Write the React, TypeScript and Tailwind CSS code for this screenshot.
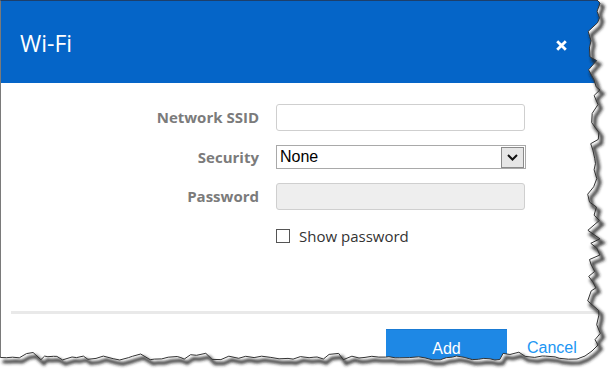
import React from 'react';

// seeded jitter so the torn edge is the same on every render
function makeRand(seed: number) {
  let s = seed;
  return () => {
    s = (s * 16807) % 2147483647;
    return s / 2147483647;
  };
}

function tornEdge() {
  const r = makeRand(91);
  const pts: [number, number][] = [[597, 0]];
  let y = 0;
  while (y < 338) {
    y += 3 + r() * 7;
    const x = 594 + (r() - 0.5) * 13;
    pts.push([x, Math.min(y, 340)]);
  }
  pts.push([598, 345], [592, 351], [585, 356], [577, 359]);
  let x = 575;
  while (x > 0) {
    x -= 3 + r() * 7;
    let yy = 358 + (r() - 0.5) * 4;
    if ((x > 20 && x < 40) || (x > 140 && x < 150) || (x > 190 && x < 210) || (x > 325 && x < 340) || (x > 500 && x < 520)) yy -= 4;
    pts.push([Math.max(x, 0), yy]);
  }
  return pts;
}

const edge = tornEdge();
const line = edge.map((p, i) => `${i ? 'L' : 'M'}${p[0].toFixed(1)} ${p[1].toFixed(1)}`).join(' ');
const mask = `M0 0 H615 V379 H0 Z ${line} L0 0 Z`;

function TornOverlay() {
  return (
    <svg className="pointer-events-none absolute inset-0" width="615" height="379" viewBox="0 0 615 379">
      <defs>
        <filter id="blur" x="-10%" y="-10%" width="120%" height="120%">
          <feGaussianBlur stdDeviation="1.5" />
        </filter>
      </defs>
      <path d={mask} fill="#fff" fillRule="evenodd" />
      <path d={line} transform="translate(3 4)" fill="none" stroke="#222" strokeOpacity="0.85" strokeWidth="3.5" filter="url(#blur)" />
      <path d={line} fill="none" stroke="#333" strokeWidth="1" />
    </svg>
  );
}

function Row({ label, children }: { label: string; children: React.ReactNode }) {
  return (
    <div className="flex items-center">
      <div className="w-[258px] text-right text-[15px] font-bold text-[#7b7b7b]">{label}</div>
      <div className="ml-[17px]">{children}</div>
    </div>
  );
}

export default function App() {
  return (
    <div className="relative h-[379px] w-[615px] overflow-hidden bg-white font-['Open_Sans',sans-serif]">
      <div className="flex h-full flex-col border-l border-t border-l-[#7a7a7a] border-t-[#1d3f6b]">
        <div className="flex h-[82px] items-center justify-between bg-[#0565c8] pl-[19px] pr-[48px] pt-[3px] text-white">
          <span className="text-[23px] leading-none">Wi-Fi</span>
          <svg width="11" height="11" viewBox="0 0 11 11" className="mt-[3px]">
            <path d="M1.2 1.2 L9.8 9.8 M9.8 1.2 L1.2 9.8" stroke="#fff" strokeWidth="2.8" />
          </svg>
        </div>

        <div className="flex h-[228px] flex-col pt-[21px]">
          <Row label="Network SSID">
            <div className="h-[27px] w-[249px] rounded-[3px] border border-[#cfcfcf] bg-white" />
          </Row>
          <div className="mt-[14px]">
            <Row label="Security">
              <div className="flex h-[24px] w-[250px] items-center border border-[#a9a9a9] bg-white pl-[3px] font-['Liberation_Sans',sans-serif] text-[16px] text-black">
                <span className="flex-1">None</span>
                <div className="mr-px flex h-[21px] w-[23px] items-center justify-center border border-[#8a8a8a] bg-[#e6e6e6]">
                  <svg width="11" height="7" viewBox="0 0 11 7">
                    <path d="M1 1 L5.5 5.5 L10 1" fill="none" stroke="#111" strokeWidth="2" />
                  </svg>
                </div>
              </div>
            </Row>
          </div>
          <div className="mt-[14px]">
            <Row label="Password">
              <div className="h-[27px] w-[249px] rounded-[3px] border border-[#cfcfcf] bg-[#eeeeee]" />
            </Row>
          </div>
          <div className="ml-[275px] mt-[15px] flex items-center">
            <div className="h-[14px] w-[14px] border border-[#555] bg-white" />
            <span className="ml-[9px] text-[15px] text-[#333]">Show password</span>
          </div>
        </div>

        <div className="ml-[10px] h-[3px] bg-[#e9e9e9]" />

        <div className="mt-[15px] flex font-['Liberation_Sans',sans-serif] text-[16px]">
          <div className="ml-[385px] flex h-[36px] w-[121px] justify-center border-t border-[#1a7bd4] bg-[#1e88e5] pt-[7px] text-white">
            Add
          </div>
          <span className="ml-[20px] pt-[7px] text-[#2196f3]">Cancel</span>
        </div>
      </div>
      <TornOverlay />
    </div>
  );
}
